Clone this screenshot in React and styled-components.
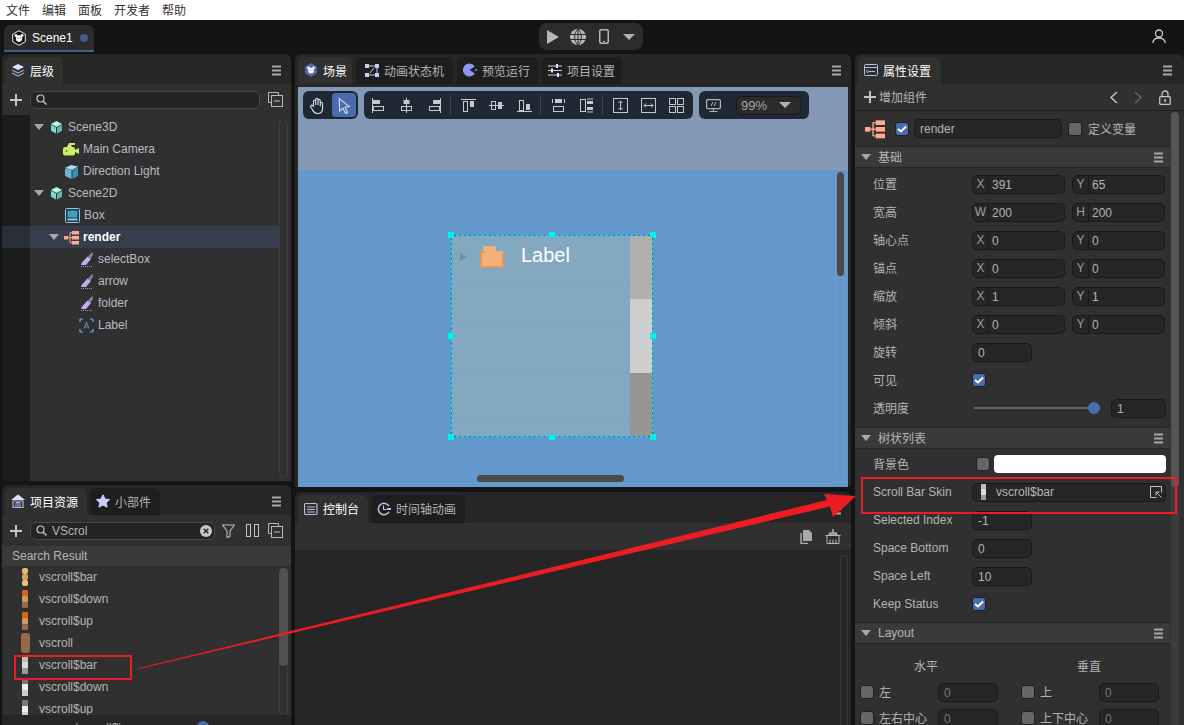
import React from 'react';
import styled, { createGlobalStyle } from 'styled-components';

const FONT = '"Liberation Sans", "Noto Sans CJK SC", sans-serif';

const Global = createGlobalStyle`
  html, body { margin: 0; padding: 0; background: #141414; }
  body { font-family: ${FONT}; font-size: 12px; color: #b4b4b4; overflow: hidden; }
  * { box-sizing: border-box; }
`;

const Page = styled.div`
  position: relative;
  width: 1184px;
  height: 725px;
  overflow: hidden;
  background: #141414;
`;

const MenuBar = styled.div`
  height: 20px;
  background: #fff;
  color: #333;
  display: flex;
  align-items: center;
  gap: 12px;
  padding: 0 0 1px 6px;
`;

const TopBar = styled.div`
  height: 34px;
  display: grid;
  grid-template-columns: 535px auto 1fr;
  align-items: start;
  padding-left: 4px;
`;

const DocTab = styled.div`
  width: 90px;
  height: 27px;
  margin-top: 5px;
  background: #2b2b2b;
  border-radius: 6px 6px 0 0;
  border-bottom: 2px solid #46598f;
  display: flex;
  align-items: center;
  gap: 5px;
  padding-left: 7px;
  color: #fff;
`;

const Dot = styled.span`
  width: 8px;
  height: 8px;
  margin-left: 2px;
  border-radius: 50%;
  background: #46598f;
`;

const RunGroup = styled.div`
  margin-top: 3px;
  width: 104px;
  height: 27px;
  background: #2c2c2c;
  border-radius: 8px;
  display: flex;
  align-items: center;
  padding-left: 8px;
`;

const UserSlot = styled.div`
  justify-self: end;
  margin: 9px 18px 0 0;
  display: flex;
`;

const Columns = styled.div`
  display: flex;
  padding-left: 2px;
  height: 671px;
`;

const Column = styled.div`
  width: ${p => p.$w}px;
  margin-right: ${p => p.$mr || 0}px;
  display: flex;
  flex-direction: column;
  gap: ${p => p.$gap || 0}px;
`;

const Panel = styled.div`
  height: ${p => (p.$h ? `${p.$h}px` : 'auto')};
  flex: ${p => (p.$h ? 'none' : 1)};
  background: #262626;
  border-radius: 6px 6px 0 0;
  display: flex;
  flex-direction: column;
  overflow: hidden;
  position: relative;
`;

const TabStrip = styled.div`
  height: ${p => p.$h || 30}px;
  flex: none;
  padding: 3px ${p => p.$pr || 10}px 0 3px;
  display: flex;
  gap: ${p => p.$gap || 3}px;
  align-items: stretch;
`;

const Tab = styled.div`
  width: ${p => p.$w}px;
  border-radius: 6px 6px 0 0;
  background: ${p => (p.$active ? '#303030' : '#1e1e1e')};
  color: ${p => (p.$active ? '#fff' : '#b4b4b4')};
  display: flex;
  align-items: center;
  gap: 5px;
  padding: 0 0 1px ${p => p.$pad || 6}px;
  white-space: nowrap;
`;

const MenuSlot = styled.div`
  margin-left: auto;
  align-self: center;
  display: flex;
`;

const ToolRow = styled.div`
  height: 31px;
  flex: none;
  background: #303030;
  display: flex;
  align-items: center;
  padding-left: 8px;
`;

const Search = styled.div`
  width: ${p => p.$w}px;
  height: 18px;
  margin-left: 8px;
  background: #242424;
  border: 1px solid #474747;
  border-radius: 6px;
  display: flex;
  align-items: center;
  gap: 5px;
  padding: 0 2px 0 5px;
  color: #b4b4b4;
`;

const ClearSlot = styled.span`
  margin-left: auto;
  display: flex;
`;

const IconSlot = styled.span`
  display: flex;
  margin-left: ${p => p.$ml || 0}px;
`;

const TreeArea = styled.div`
  flex: 1;
  display: grid;
  grid-template-columns: 28px 1fr 12px;
  min-height: 0;
  background: #303030;
  position: relative;
`;

const Gutter = styled.div`
  background: #1c1c1c;
`;

const TreeList = styled.div`
  padding-top: 1px;
  grid-column: 2;
`;

const Row = styled.div`
  height: 22px;
  display: flex;
  align-items: center;
  padding-left: ${p => p.$pad}px;
  gap: 4px;
  color: ${p => (p.$sel ? '#fff' : '#b6bcc6')};
  font-weight: ${p => (p.$sel ? 700 : 400)};
  background: ${p => (p.$sel ? '#363d4d' : 'transparent')};
  position: relative;
  &::before {
    content: '';
    display: ${p => (p.$sel ? 'block' : 'none')};
    position: absolute;
    left: -28px;
    width: 28px;
    top: 0;
    bottom: 0;
    background: #2a2f3b;
  }
`;

const Caret = styled.span`
  width: 0;
  height: 0;
  margin-right: 1px;
  border-left: 5px solid transparent;
  border-right: 5px solid transparent;
  border-top: 6px solid #a8a8a8;
`;

const Track = styled.div`
  margin: ${p => p.$mt || 4}px 3px 3px 0;
  border: 1px solid #3e3e3e;
  border-radius: 5px;
`;

const TrackThumb = styled.div`
  height: ${p => p.$h}px;
  margin: -1px;
  background: #505050;
  border-radius: 5px;
`;

const ResultHead = styled.div`
  height: 20px;
  flex: none;
  background: #3a3a3a;
  padding-left: 10px;
  display: flex;
  align-items: center;
  color: #b4b4b4;
`;

const ResList = styled.div`
  flex: 1;
  min-height: 0;
  display: grid;
  grid-template-columns: 1fr 12px;
  background: #303030;
  overflow: hidden;
`;

const ResRow = styled.div`
  height: 22px;
  display: flex;
  align-items: center;
  color: #b4b4b4;
`;

const ThumbCell = styled.span`
  width: 37px;
  display: flex;
  justify-content: center;
  padding-left: 9px;
`;

const ResFooter = styled.div`
  height: 10px;
  flex: none;
  background: #262626;
  position: relative;
  overflow: hidden;
  padding: 6px 0 0 43px;
  line-height: 14px;
  color: #a8a8a8;
`;

const FooterKnob = styled.span`
  position: absolute;
  left: 195px;
  top: 6px;
  width: 12px;
  height: 12px;
  border-radius: 50%;
  background: #4a6cae;
`;

const Viewport = styled.div`
  flex: 1;
  margin: 3px 3px 0;
  background: #6498cc;
  position: relative;
  overflow: hidden;
`;

const SceneBand = styled.div`
  height: 83px;
  background: #8499b6;
`;

const SceneToolbar = styled.div`
  position: absolute;
  left: 5px;
  top: 4px;
  display: flex;
  gap: 6px;
  height: 28px;
`;

const ToolGroup = styled.div`
  background: #1f2835;
  border-radius: 6px;
  display: flex;
  align-items: center;
  padding: ${p => p.$pad || '0 3px 0 0'};
`;

const ToolBtn = styled.span`
  width: ${p => p.$w || 28}px;
  height: 24px;
  display: flex;
  align-items: center;
  justify-content: center;
  border-radius: 4px;
  background: ${p => (p.$on ? '#4a6cae' : 'transparent')};
`;

const ToolSep = styled.span`
  width: 1px;
  height: 20px;
  margin: 0 3px 0 2px;
  background: #3a4452;
`;

const Zoom = styled.div`
  width: 65px;
  height: 19px;
  margin-left: 9px;
  background: #2b2b2b;
  border: 1px solid #1a1a1a;
  border-radius: 5px;
  display: flex;
  align-items: center;
  justify-content: space-between;
  padding: 0 9px 0 4px;
  font-size: 13px;
  color: #a8a8a8;
`;

const ZoomCaret = styled.span`
  width: 0;
  height: 0;
  margin-left: ${p => p.$ml || 0}px;
  border-left: 6px solid transparent;
  border-right: 6px solid transparent;
  border-top: 6px solid #b4b4b4;
`;

const ScrollTrackV = styled.div`
  position: absolute;
  right: 4px;
  top: 85px;
  bottom: 4px;
  width: 9px;
  border: 1px solid rgba(255, 255, 255, 0.05);
  border-radius: 5px;
`;

const ScrollTrackH = styled.div`
  position: absolute;
  left: 3px;
  right: 14px;
  bottom: 3px;
  height: 9px;
  border: 1px solid rgba(255, 255, 255, 0.05);
  border-radius: 5px;
`;

const ScrollV = styled.div`
  position: absolute;
  left: 539px;
  top: 85px;
  width: 7px;
  height: 104px;
  border-radius: 4px;
  background: #4a4a4a;
`;

const ScrollH = styled.div`
  position: absolute;
  left: 179px;
  top: 388px;
  width: 147px;
  height: 7px;
  border-radius: 4px;
  background: #4a4a4a;
`;

const Widget = styled.div`
  position: absolute;
  left: 153px;
  top: 148px;
  width: 202px;
  height: 202px;
  background: #84a8bf;
  border: 1px solid #00868c;
  display: grid;
  grid-template-columns: 1fr 22px;
  &::after {
    content: '';
    position: absolute;
    inset: -1px;
    border: 1px dashed #1fd8e8;
  }
`;

const WidgetRows = styled.div`
  display: flex;
  flex-direction: column;
`;

const WidgetRow = styled.div`
  height: 46px;
  border-bottom: 1px solid #7ca4c6;
  display: flex;
  align-items: center;
  padding: 0 0 3px 8px;
  color: #fff;
  font-size: 20px;
`;

const WidgetTri = styled.span`
  width: 0;
  height: 0;
  border-top: 4px solid transparent;
  border-bottom: 4px solid transparent;
  border-left: 7px solid #7f8a94;
  margin-right: 13px;
`;

const WidgetText = styled.span`
  margin: 0 0 4px 17px;
`;

const WidgetBar = styled.div`
  display: flex;
  flex-direction: column;
`;

const BarPart = styled.div`
  height: ${p => p.$h}px;
  background: ${p => p.$c};
`;

const Handle = styled.span`
  position: absolute;
  z-index: 1;
  width: 6px;
  height: 6px;
  background: #00f0f0;
  left: ${p => p.$x * 2.02 - 4}px;
  top: ${p => p.$y * 2.02 - 4}px;
`;

const ConsoleBar = styled.div`
  height: 27px;
  flex: none;
  background: #303030;
  display: flex;
  align-items: center;
  justify-content: flex-end;
  gap: 13px;
  padding-right: 10px;
`;

const ConsoleBody = styled.div`
  flex: 1;
  display: flex;
  justify-content: flex-end;
  padding: 5px 3px 0 0;
`;

const ConsoleTrack = styled.div`
  width: 8px;
  border: 1px solid #3a3a3a;
  border-bottom: 0;
  border-radius: 5px 5px 0 0;
`;

const PropBody = styled.div`
  flex: 1;
  display: grid;
  grid-template-columns: 315px 1fr;
  background: #303030;
  min-height: 0;
  overflow: hidden;
`;

const PropTools = styled.div`
  height: 27px;
  flex: none;
  background: #303030;
  border-bottom: 1px solid #1f1f1f;
  display: flex;
  align-items: center;
  padding: 0 13px 0 9px;
  gap: 3px;
  color: #b4b4b4;
`;

const ToolsText = styled.span`
  padding-bottom: 2px;
`;

const NavIcons = styled.div`
  margin-left: auto;
  display: flex;
  align-items: center;
  gap: 16px;
`;

const NodeHead = styled.div`
  height: 35px;
  display: flex;
  align-items: center;
  padding-left: 10px;
  color: #b4b4b4;
`;

const Check = styled.span`
  width: 14px;
  height: 14px;
  flex: none;
  border-radius: 3px;
  background: ${p => (p.$on ? '#4a6cae' : '#666')};
  border: 1px solid #1f1f1f;
  display: flex;
  align-items: center;
  justify-content: center;
`;

const TextField = styled.div`
  width: ${p => p.$w}px;
  height: 19px;
  background: #262626;
  border: 1px solid #1a1a1a;
  border-radius: 5px;
  display: flex;
  align-items: center;
  padding: ${p => p.$pt ?? 2}px ${p => p.$pr || 0}px 0 ${p => p.$pad || 5}px;
  color: ${p => (p.$dim ? '#6e7680' : '#b4b4b4')};
  flex: none;
`;

const FieldTag = styled.span`
  width: 16px;
  height: calc(100% + 2px);
  margin: -2px 3px 0 -5px;
  border-right: 1px solid #1a1a1a;
  display: flex;
  align-items: center;
  justify-content: center;
  color: #9aa0a8;
`;

const Section = styled.div`
  height: 22px;
  margin-top: ${p => p.$mt || 0}px;
  background: #3a3a3a;
  border-top: 1px solid #262626;
  border-bottom: 1px solid #262626;
  display: flex;
  align-items: center;
  padding: 0 7px 0 6px;
  gap: 5px;
  color: #b4b4b4;
`;

const SectionCaret = styled(Caret)`
  margin-right: 2px;
`;

const SectionTitle = styled.span`
  padding-bottom: ${p => (p.$cjk ? 2 : 0)}px;
`;

const PropRows = styled.div`
  padding-top: ${p => p.$pt || 0}px;
`;

const PropRow = styled.div`
  height: 28px;
  display: flex;
  align-items: center;
  padding-left: 18px;
  gap: 7px;
  color: #b4b4b4;
`;

const PropLabel = styled.span`
  width: 92px;
  flex: none;
  padding-bottom: ${p => (p.$cjk ? 2 : 0)}px;
`;

const Slider = styled.div`
  width: 120px;
  height: 2px;
  background: #666;
  position: relative;
  margin: 0 10px 0 2px;
`;

const SliderKnob = styled.span`
  position: absolute;
  right: -6px;
  top: -5px;
  width: 12px;
  height: 12px;
  border-radius: 50%;
  background: #4a6cae;
`;

const ColorCell = styled.div`
  display: flex;
  align-items: center;
  gap: 4px;
  margin-left: 4px;
`;

const Swatch = styled.div`
  width: 172px;
  height: 18px;
  background: #fff;
  border-radius: 4px;
`;

const SkinThumb = styled.span`
  width: 5px;
  height: 16px;
  margin-right: 10px;
  background: linear-gradient(#bdbdbd 0 33%, #dcdcdc 33% 66%, #999 66%);
`;

const LayoutHead = styled.div`
  display: flex;
  height: 35px;
  padding-top: 13px;
  text-align: center;
`;

const LayoutTitle = styled.span`
  width: ${p => p.$w}px;
  margin-right: ${p => p.$mr || 0}px;
`;

const LayoutGrid = styled.div`
  display: grid;
  grid-template-columns: 161px 161px;
  padding-left: 5px;
`;

const LayoutCell = styled.div`
  height: 26px;
  display: flex;
  align-items: center;
`;

const LayoutLabel = styled.span`
  width: 59px;
  margin-left: 5px;
  flex: none;
  padding-bottom: 2px;
`;

const PropScroll = styled.div`
  margin: 1px 0 0 1px;
  width: 8px;
  border-radius: 5px;
  background: #3c3c3c;
  display: flex;
  flex-direction: column;
`;

const PropThumb = styled.div`
  height: 375px;
  background: #555;
  border-radius: 5px;
`;

const Annotations = styled.svg`
  position: absolute;
  left: 0;
  top: 0;
  pointer-events: none;
`;

/* ---- icons ---- */

const Svg = ({ s = 14, w, h, vb, children }) => (
  <svg width={w || s} height={h || s} viewBox={vb || `0 0 ${w || s} ${h || s}`} fill="none">
    {children}
  </svg>
);

const MenuIcon = () => (
  <Svg w={9} h={11}>
    <path d="M0 1.500h9M0 5.500h9M0 9.500h9" stroke="#a8a8a8" strokeWidth="2" />
  </Svg>
);

const PlusIcon = () => (
  <Svg s={12}>
    <path d="M6 0v12M0 6h12" stroke="#c4c4c4" strokeWidth="2" />
  </Svg>
);

const SearchIcon = () => (
  <Svg s={11}>
    <circle cx="4.500" cy="4.500" r="3.500" stroke="#c4c4c4" strokeWidth="1.200" />
    <path d="M7 7l3.500 3.500" stroke="#c4c4c4" strokeWidth="1.500" />
  </Svg>
);

const CollapseIcon = () => (
  <Svg s={15}>
    <path d="M3.500 10.500H.5V.5h10V3" stroke="#b8b8b8" />
    <rect x="3.500" y="3.500" width="11" height="11" stroke="#b8b8b8" />
    <path d="M6 9h6" stroke="#b8b8b8" />
  </Svg>
);

const LogoIcon = ({ bg = '#111', line = '#eee', s = 16 }) => (
  <Svg s={s} vb="0 0 16 16">
    <path d="M8 .7l6.300 3.600v7.400L8 15.300l-6.300-3.600V4.300z" fill={bg} stroke={line} />
    <circle cx="5" cy="5.400" r="1.500" fill="#fff" />
    <circle cx="11" cy="5.400" r="1.500" fill="#fff" />
    <ellipse cx="8" cy="8.600" rx="3.200" ry="3.300" fill="#fff" />
    <path d="M6.500 8h.8M8.700 8h.8" stroke={bg} />
  </Svg>
);

const LayersIcon = () => (
  <Svg s={14}>
    <path d="M7 1l6 3-6 3-6-3z" fill="#dfe2ff" />
    <path d="M1 7l6 3 6-3M1 10l6 3 6-3" stroke="#9aa0c0" strokeWidth="1.300" />
  </Svg>
);

const CubeIcon = () => (
  <Svg s={15}>
    <path d="M7.500 1l5.500 3-5.500 3L2 4z" fill="#b8f3e8" />
    <path d="M2 4.800l5 2.800v6L2 10.800z" fill="#7fd8cb" />
    <path d="M13 4.800L8 7.600v6l5-2.800z" fill="#58b8ad" />
  </Svg>
);

const CameraIcon = () => (
  <Svg w={16} h={14}>
    <path d="M4 5l2-4h6v2H8l1 2z" fill="#c8ee6c" />
    <rect x="0" y="5" width="12" height="8.500" rx="2" fill="#c8ee6c" />
    <path d="M12 8l4-2v6l-4-2z" fill="#c8ee6c" />
    <circle cx="3.500" cy="9" r="1" fill="#6a8030" />
  </Svg>
);

const LightIcon = () => (
  <Svg s={15}>
    <path d="M1 4l6-3 7 1.500-6 3.500z" fill="#a8def0" />
    <path d="M1 4.500l6.500 1.800V15L1 12z" fill="#67b6d6" />
    <path d="M8.500 6.300L14 3v9l-5.500 3z" fill="#3f8fb5" />
  </Svg>
);

const BoxIcon = () => (
  <Svg s={15}>
    <rect x=".5" y=".5" width="14" height="14" rx="1" stroke="#7fd0ee" />
    <rect x="2.500" y="2.500" width="10" height="7" fill="#3aa0c6" />
    <rect x="2.500" y="10.500" width="10" height="2" fill="#7fd0ee" />
  </Svg>
);

const RenderIcon = ({ s = 15 }) => (
  <Svg s={s} vb="0 0 15 15">
    <rect x="0" y="6" width="4" height="3.500" fill="#ffa98f" />
    <rect x="8" y="1" width="7" height="3.500" fill="#ffa98f" />
    <rect x="8" y="6" width="7" height="3.500" fill="#ffa98f" />
    <rect x="8" y="11" width="7" height="3.500" fill="#ffa98f" />
    <path d="M4 7.700h4M6 2.700v10M6 2.700h2M6 12.700h2" stroke="#ffa98f" />
  </Svg>
);

const BrushIcon = () => (
  <Svg w={14} h={15}>
    <path d="M12.500 0L8 4.500l2.500 2 2.500-4z" fill="#8d86a8" />
    <path d="M7.500 4.500L2 10.500l-1 2.500h5l5-6z" fill="#bcb0f4" />
    <path d="M1 14.500h12" stroke="#9a94b4" strokeDasharray="1 1" />
  </Svg>
);

const LabelIcon = () => (
  <Svg s={15}>
    <path d="M1 4V2a1 1 0 0 1 1-1h2M11 1h2a1 1 0 0 1 1 1v2M14 11v2a1 1 0 0 1-1 1h-2M4 14H2a1 1 0 0 1-1-1v-2" stroke="#6eb4ec" strokeWidth="1.200" />
    <path d="M5 10.500l2.500-6 2.500 6M6 9h3" stroke="#5c86b0" strokeWidth="1.200" />
  </Svg>
);

const HomeIcon = () => (
  <Svg s={14}>
    <path d="M7 .5L14 6H0z" fill="#dfe2ff" />
    <path d="M2 7h10v6.500H2z" stroke="#aeb4e0" strokeWidth="1.200" />
    <path d="M5 8.500h4v5H5zM7 8.500v5" stroke="#aeb4e0" />
  </Svg>
);

const StarIcon = () => (
  <Svg s={14}>
    <path d="M7 .8l2 4.200 4.600.6-3.400 3.100.9 4.500L7 11l-4.100 2.200.9-4.500L.4 5.600 5 5z" fill="#c8ceff" stroke="#c8ceff" strokeLinejoin="round" />
  </Svg>
);

const FilterIcon = () => (
  <Svg w={13} h={14}>
    <path d="M.5 1h12L8 7v5.500L5 13.500V7z" stroke="#b8b8b8" strokeWidth="1.100" />
  </Svg>
);

const ColumnsIcon = () => (
  <Svg w={13} h={13}>
    <rect x=".5" y=".5" width="4" height="12" stroke="#c4c4c4" />
    <rect x="8.500" y=".5" width="4" height="12" stroke="#c4c4c4" />
  </Svg>
);

const ClearIcon = () => (
  <Svg s={12}>
    <circle cx="6" cy="6" r="6" fill="#c8c8c8" />
    <path d="M3.700 3.700l4.600 4.600M8.300 3.700L3.700 8.300" stroke="#222" strokeWidth="1.500" />
  </Svg>
);

const GraphIcon = () => (
  <Svg s={14}>
    <rect x="0" y="1" width="4" height="4" fill="#c8ceee" />
    <rect x="10" y="1" width="4" height="4" fill="#c8ceee" />
    <rect x="0" y="10" width="4" height="4" fill="#c8ceee" />
    <rect x="10" y="10" width="4" height="4" fill="#c8ceee" />
    <path d="M4 3h6M12 5v5M4 12h6M9 5L5 10" stroke="#c8ceee" />
  </Svg>
);

const PacIcon = () => (
  <Svg s={14}>
    <path d="M6.500.5a6.500 6.500 0 1 0 5.400 10L6.500 7l5.300-3.400A6.500 6.500 0 0 0 6.500.5z" fill="#8f96f0" />
    <circle cx="13" cy="7" r="1" fill="#8f96f0" />
  </Svg>
);

const SlidersIcon = () => (
  <Svg s={14}>
    <path d="M0 3h14M0 7.500h14M0 12h14" stroke="#c8ceee" />
    <rect x="8" y="1" width="2" height="4" fill="#e4e6ff" />
    <rect x="3" y="5.500" width="2" height="4" fill="#e4e6ff" />
    <rect x="9" y="10" width="2" height="4" fill="#e4e6ff" />
  </Svg>
);

const ConsoleIcon = () => (
  <Svg s={14}>
    <rect x=".5" y="1.500" width="12.500" height="11" rx="1.500" stroke="#b8bedc" strokeWidth="1.200" />
    <path d="M3 5h8M3 7.500h8M3 10h8" stroke="#b8bedc" />
  </Svg>
);

const ClockIcon = () => (
  <Svg s={14}>
    <path d="M12 4.200A5.700 5.700 0 1 0 12 9.800" stroke="#b8bedc" strokeWidth="1.500" />
    <path d="M6.500 3.500v4h3" stroke="#b8bedc" strokeWidth="1.200" />
    <rect x="10" y="6" width="4" height="2" fill="#b8bedc" />
  </Svg>
);

const PropsIcon = () => (
  <Svg s={14}>
    <rect x=".5" y="1.500" width="13" height="11" rx="1" stroke="#b8bedc" />
    <path d="M1 4.500h12" stroke="#b8bedc" />
    <circle cx="3.500" cy="8.500" r="1" stroke="#b8bedc" />
    <path d="M5 8.500h6" stroke="#b8bedc" />
  </Svg>
);

const CopyIcon = () => (
  <Svg w={12} h={14}>
    <path d="M3 0h6l3 3v8H3z" fill="#a8a8a8" />
    <path d="M1 3v10.500h7" stroke="#a8a8a8" strokeWidth="1.500" />
  </Svg>
);

const BasketIcon = () => (
  <Svg w={16} h={15}>
    <path d="M8 0v4M5 4h6l1 2H4z" stroke="#b8b8b8" strokeWidth="1.400" />
    <path d="M.5 6.500h15M2 6.500v8h12v-8M5 10.500v4M8 10.500v4M11 10.500v4" stroke="#b8b8b8" />
  </Svg>
);

const PlayIcon = () => (
  <Svg w={12} h={14}>
    <path d="M0 0l12 7-12 7z" fill="#b8b8b8" />
  </Svg>
);

const GlobeIcon = () => (
  <Svg s={16}>
    <circle cx="8" cy="8" r="8" fill="#b8b8b8" />
    <path d="M0 5.500h16M0 10.500h16M8 0v16M8 0C3.500 4 3.500 12 8 16M8 0c4.500 4 4.500 12 0 16" stroke="#2c2c2c" />
  </Svg>
);

const PhoneIcon = () => (
  <Svg w={10} h={15}>
    <rect x=".75" y=".75" width="8.500" height="13.500" rx="1.500" stroke="#b8b8b8" strokeWidth="1.500" />
    <path d="M4 12.500h2" stroke="#b8b8b8" />
  </Svg>
);

const UserIcon = () => (
  <Svg s={14}>
    <circle cx="7" cy="4.500" r="3.500" stroke="#ccc" strokeWidth="1.300" />
    <path d="M.7 14c.5-3.500 3-5 6.300-5s5.800 1.500 6.300 5" stroke="#ccc" strokeWidth="1.300" />
  </Svg>
);

const ChevronIcon = ({ dir, color }) => (
  <Svg w={9} h={13}>
    <path d={dir === 'l' ? 'M8 1L2 6.500 8 12' : 'M1 1l6 5.500L1 12'} stroke={color} strokeWidth="1.500" />
  </Svg>
);

const LockIcon = () => (
  <Svg w={12} h={15}>
    <path d="M3 7V4a3 3 0 0 1 6 0v3" stroke="#c4c4c4" strokeWidth="1.300" />
    <rect x=".7" y="6.700" width="10.600" height="7.600" rx="1" stroke="#c4c4c4" strokeWidth="1.300" />
    <path d="M6 9v3" stroke="#c4c4c4" strokeWidth="1.500" />
  </Svg>
);

const TickIcon = () => (
  <Svg w={10} h={8}>
    <path d="M1 4l3 2.500L9 1.500" stroke="#fff" strokeWidth="2" />
  </Svg>
);

const PickIcon = () => (
  <Svg s={12}>
    <path d="M.5 11.500V.5h11v6M.5 11.500h6" stroke="#c4c4c4" />
    <path d="M11.500 11.500L6 6M6 6h3.500M6 6v3.500" stroke="#c4c4c4" />
  </Svg>
);

const HandIcon = () => (
  <Svg s={18} vb="0 0 16 16">
    <path d="M4 9V4.500a1 1 0 0 1 2 0V8 3a1 1 0 0 1 2 0v5-4a1 1 0 0 1 2 0v5-2.500a1 1 0 0 1 2 0V11c0 3-2 4.500-4.500 4.500-2 0-3-.8-4-2.500L1.500 9.500c-.6-1 .8-1.800 1.500-1z" stroke="#ddd" />
  </Svg>
);

const ArrowToolIcon = () => (
  <Svg s={17} vb="0 0 16 16">
    <path d="M3 1.500l9.500 7.500-4 .5 2.500 5-2 1-2.500-5-3 2.800z" stroke="#d8e0f0" />
  </Svg>
);

const AlignIcon = ({ kind }) => {
  const c = '#c8c8c8';
  const parts = {
    hl: <><path d="M1.500 0v15" stroke={c} /><rect x="2" y="2" width="7" height="4" fill={c} /><rect x="2.500" y="8.500" width="10" height="4" stroke={c} /></>,
    hc: <><path d="M7.500 0v15" stroke={c} /><rect x="4.500" y="2" width="6" height="4" fill={c} /><rect x="2.500" y="8.500" width="10" height="4" stroke={c} /></>,
    hr: <><path d="M13.500 0v15" stroke={c} /><rect x="6" y="2" width="7" height="4" fill={c} /><rect x="2.500" y="8.500" width="10" height="4" stroke={c} /></>,
    vt: <><path d="M0 1.500h15" stroke={c} /><rect x="2.500" y="3.500" width="4" height="10" stroke={c} /><rect x="9" y="3" width="4" height="6" fill={c} /></>,
    vc: <><path d="M0 7.500h15" stroke={c} /><rect x="2.500" y="3.500" width="4" height="8" stroke={c} /><rect x="9" y="4" width="4" height="7" fill={c} /></>,
    vb: <><path d="M0 13.500h15" stroke={c} /><rect x="2.500" y="2.500" width="4" height="10" stroke={c} /><rect x="9" y="6" width="4" height="6" fill={c} /></>,
    dh: <><path d="M1.500 1v4M13.500 1v4" stroke={c} /><rect x="4" y="1" width="7" height="4" fill={c} /><rect x="2.500" y="8.500" width="10" height="5" stroke={c} /></>,
    dv: <><rect x="1.500" y="1.500" width="5" height="12" stroke={c} /><rect x="8" y="3" width="6" height="3" fill={c} /><rect x="8" y="9" width="6" height="3" fill={c} /><path d="M8 1h6M8 14h6" stroke={c} /></>,
    sh: <><rect x=".5" y=".5" width="14" height="14" stroke={c} /><path d="M7.500 3v9M5.500 5l2-2 2 2M5.500 10l2 2 2-2" stroke={c} /></>,
    sw: <><rect x=".5" y=".5" width="14" height="14" stroke={c} /><path d="M3 7.500h9M5 5.500l-2 2 2 2M10 5.500l2 2-2 2" stroke={c} /></>,
    gr: <><rect x=".5" y=".5" width="6" height="6" stroke={c} /><rect x="8.500" y=".5" width="6" height="6" stroke={c} /><rect x=".5" y="8.500" width="6" height="6" stroke={c} /><rect x="8.500" y="8.500" width="6" height="6" stroke={c} /></>,
  };
  return <Svg s={15}>{parts[kind]}</Svg>;
};

const MonitorIcon = () => (
  <Svg s={15}>
    <rect x=".6" y="1.600" width="13.800" height="9" rx="1" stroke="#b4b4b4" strokeWidth="1.200" />
    <path d="M5 8l2-4M8 8l2-4M7.500 10.500v2.500M3.500 13.500h8" stroke="#b4b4b4" />
  </Svg>
);

const FolderIcon = () => (
  <svg width="24" height="22" viewBox="0 0 24 22">
    <path d="M1 6h3V1h11v5h8v15H1z" fill="#f5b078" stroke="#e09458" strokeWidth="1.500" />
    <path d="M4 5V1h11v5h8" stroke="#e8d0b8" fill="none" />
  </svg>
);

const BarThumb = ({ tones, h = 18, w = 6, rx = 0 }) => (
  <svg width={w} height={h} viewBox={`0 0 ${w} ${h}`}>
    {tones.map((c, i) => (
      <rect key={c} x="0" y={(i * h) / tones.length} width={w} height={h / tones.length} rx={rx} fill={c} />
    ))}
  </svg>
);

/* ---- data ---- */

const treeRows = [
  { pad: 4, caret: true, icon: <CubeIcon />, text: 'Scene3D' },
  { pad: 33, icon: <CameraIcon />, text: 'Main Camera' },
  { pad: 34, icon: <LightIcon />, text: 'Direction Light' },
  { pad: 4, caret: true, icon: <CubeIcon />, text: 'Scene2D' },
  { pad: 35, icon: <BoxIcon />, text: 'Box' },
  { pad: 19, caret: true, icon: <RenderIcon />, text: 'render', sel: true },
  { pad: 50, icon: <BrushIcon />, text: 'selectBox' },
  { pad: 50, icon: <BrushIcon />, text: 'arrow' },
  { pad: 50, icon: <BrushIcon />, text: 'folder' },
  { pad: 49, icon: <LabelIcon />, text: 'Label' },
];

const ORANGE = ['#e8b770', '#d9a45e', '#ecc07c'];
const ARROWS = ['#d9651c', '#c99a5e', '#96694a'];
const GREYS = ['#bdbdbd', '#dcdcdc', '#999'];
const LIGHTS = ['#777', '#eee', '#ccc'];

const resources = [
  { name: 'vscroll$bar', tones: ORANGE, rx: 2 },
  { name: 'vscroll$down', tones: ARROWS, rx: 1 },
  { name: 'vscroll$up', tones: ARROWS, rx: 1 },
  { name: 'vscroll', tones: ['#96694a'], w: 9, h: 20, rx: 3 },
  { name: 'vscroll$bar', tones: GREYS },
  { name: 'vscroll$down', tones: LIGHTS },
  { name: 'vscroll$up', tones: LIGHTS },
];

const basics = [
  ['位置', 'X', '391', 'Y', '65'],
  ['宽高', 'W', '200', 'H', '200'],
  ['轴心点', 'X', '0', 'Y', '0'],
  ['锚点', 'X', '0', 'Y', '0'],
  ['缩放', 'X', '1', 'Y', '1'],
  ['倾斜', 'X', '0', 'Y', '0'],
];

const handles = [
  [0, 0], [50, 0], [100, 0], [0, 50], [100, 50], [0, 100], [50, 100], [100, 100],
];

const Pair = ({ tag, value }) => (
  <TextField $w={93}>
    <FieldTag>{tag}</FieldTag>
    {value}
  </TextField>
);

const SectionBar = ({ title, mt, cjk }) => (
  <Section $mt={mt}>
    <SectionCaret />
    <SectionTitle $cjk={cjk}>{title}</SectionTitle>
    <MenuSlot><MenuIcon /></MenuSlot>
  </Section>
);

const LayoutItem = ({ label }) => (
  <LayoutCell>
    <Check />
    <LayoutLabel>{label}</LayoutLabel>
    <TextField $w={60} $dim>0</TextField>
  </LayoutCell>
);

export default function App() {
  return (
    <Page>
      <Global />
      <MenuBar>
        <span>文件</span><span>编辑</span><span>面板</span><span>开发者</span><span>帮助</span>
      </MenuBar>
      <TopBar>
        <DocTab>
          <LogoIcon />
          Scene1
          <Dot />
        </DocTab>
        <RunGroup>
          <PlayIcon />
          <IconSlot $ml={11}><GlobeIcon /></IconSlot>
          <IconSlot $ml={13}><PhoneIcon /></IconSlot>
          <ZoomCaret $ml={14} />
        </RunGroup>
        <UserSlot><UserIcon /></UserSlot>
      </TopBar>
      <Columns>
        <Column $w={289} $mr={4} $gap={4}>
          <Panel $h={427}>
            <TabStrip>
              <Tab $w={58} $active><LayersIcon />层级</Tab>
              <MenuSlot><MenuIcon /></MenuSlot>
            </TabStrip>
            <ToolRow>
              <PlusIcon />
              <Search $w={230}><SearchIcon /></Search>
              <IconSlot $ml={8}><CollapseIcon /></IconSlot>
            </ToolRow>
            <TreeArea>
              <Gutter />
              <TreeList>
                {treeRows.map(r => (
                  <Row key={r.text} $pad={r.pad} $sel={r.sel}>
                    {r.caret && <Caret />}
                    {r.icon}
                    {r.text}
                  </Row>
                ))}
              </TreeList>
              <Track />
            </TreeArea>
          </Panel>
          <Panel>
            <TabStrip>
              <Tab $w={82} $active><HomeIcon />项目资源</Tab>
              <Tab $w={70}><StarIcon />小部件</Tab>
              <MenuSlot><MenuIcon /></MenuSlot>
            </TabStrip>
            <ToolRow>
              <PlusIcon />
              <Search $w={185}><SearchIcon />VScrol<ClearSlot><ClearIcon /></ClearSlot></Search>
              <IconSlot $ml={7}><FilterIcon /></IconSlot>
              <IconSlot $ml={11}><ColumnsIcon /></IconSlot>
              <IconSlot $ml={9}><CollapseIcon /></IconSlot>
            </ToolRow>
            <ResultHead>Search Result</ResultHead>
            <ResList>
              <div>
                {resources.map((r, i) => (
                  <ResRow key={i}>
                    <ThumbCell><BarThumb tones={r.tones} w={r.w} h={r.h} rx={r.rx} /></ThumbCell>
                    {r.name}
                  </ResRow>
                ))}
              </div>
              <Track $mt={2}><TrackThumb $h={98} /></Track>
            </ResList>
            <ResFooter>comp/vscroll$bar<FooterKnob /></ResFooter>
          </Panel>
        </Column>
        <Column $w={556} $mr={4} $gap={5}>
          <Panel $h={433}>
            <TabStrip $gap={4}>
              <Tab $w={54} $active><LogoIcon bg="#5866b0" line="#5866b0" s={14} />场景</Tab>
              <Tab $w={97} $pad={9}><GraphIcon />动画状态机</Tab>
              <Tab $w={81}><PacIcon />预览运行</Tab>
              <Tab $w={80}><SlidersIcon />项目设置</Tab>
              <MenuSlot><MenuIcon /></MenuSlot>
            </TabStrip>
            <Viewport>
              <SceneBand />
              <ScrollTrackV />
              <ScrollTrackH />
              <SceneToolbar>
                <ToolGroup $pad="0 2px 0 0">
                  <ToolBtn $w={29}><HandIcon /></ToolBtn>
                  <ToolBtn $w={24} $on><ArrowToolIcon /></ToolBtn>
                </ToolGroup>
                <ToolGroup>
                  <ToolBtn><AlignIcon kind="hl" /></ToolBtn>
                  <ToolBtn><AlignIcon kind="hc" /></ToolBtn>
                  <ToolBtn><AlignIcon kind="hr" /></ToolBtn>
                  <ToolSep />
                  <ToolBtn><AlignIcon kind="vt" /></ToolBtn>
                  <ToolBtn><AlignIcon kind="vc" /></ToolBtn>
                  <ToolBtn><AlignIcon kind="vb" /></ToolBtn>
                  <ToolSep />
                  <ToolBtn><AlignIcon kind="dh" /></ToolBtn>
                  <ToolBtn><AlignIcon kind="dv" /></ToolBtn>
                  <ToolSep />
                  <ToolBtn><AlignIcon kind="sh" /></ToolBtn>
                  <ToolBtn><AlignIcon kind="sw" /></ToolBtn>
                  <ToolBtn><AlignIcon kind="gr" /></ToolBtn>
                </ToolGroup>
                <ToolGroup $pad="0 8px 0 0">
                  <ToolBtn><MonitorIcon /></ToolBtn>
                  <Zoom>99%<ZoomCaret /></Zoom>
                </ToolGroup>
              </SceneToolbar>
              <ScrollV />
              <ScrollH />
              <Widget>
                <WidgetRows>
                  <WidgetRow>
                    <WidgetTri />
                    <FolderIcon />
                    <WidgetText>Label</WidgetText>
                  </WidgetRow>
                  <WidgetRow />
                  <WidgetRow />
                  <WidgetRow />
                </WidgetRows>
                <WidgetBar>
                  <BarPart $h={63} $c="#b0b0b0" />
                  <BarPart $h={74} $c="#cfcfcf" />
                  <BarPart $h={63} $c="#969696" />
                </WidgetBar>
                {handles.map(([x, y]) => <Handle key={`${x}-${y}`} $x={x} $y={y} />)}
              </Widget>
            </Viewport>
          </Panel>
          <Panel>
            <TabStrip $h={31}>
              <Tab $w={70} $active><ConsoleIcon />控制台</Tab>
              <Tab $w={94}><ClockIcon />时间轴动画</Tab>
              <MenuSlot><MenuIcon /></MenuSlot>
            </TabStrip>
            <ConsoleBar><CopyIcon /><BasketIcon /></ConsoleBar>
            <ConsoleBody><ConsoleTrack /></ConsoleBody>
          </Panel>
        </Column>
        <Column $w={329}>
          <Panel>
            <TabStrip $pr={12}>
              <Tab $w={83} $active><PropsIcon />属性设置</Tab>
              <MenuSlot><MenuIcon /></MenuSlot>
            </TabStrip>
            <PropTools>
              <PlusIcon />
              <ToolsText>增加组件</ToolsText>
              <NavIcons>
                <ChevronIcon dir="l" color="#c4c4c4" />
                <ChevronIcon dir="r" color="#666" />
                <LockIcon />
              </NavIcons>
            </PropTools>
            <PropBody>
              <div>
                <NodeHead>
                  <RenderIcon s={20} />
                  <IconSlot $ml={10}><Check $on><TickIcon /></Check></IconSlot>
                  <IconSlot $ml={5}><TextField $w={148} $pt={0}>render</TextField></IconSlot>
                  <IconSlot $ml={6}><Check /></IconSlot>
                  <IconSlot $ml={6}>定义变量</IconSlot>
                </NodeHead>
                <SectionBar title="基础" cjk />
                <PropRows $pt={2}>
                  {basics.map(([label, a, av, b, bv]) => (
                    <PropRow key={label}>
                      <PropLabel $cjk>{label}</PropLabel>
                      <Pair tag={a} value={av} />
                      <Pair tag={b} value={bv} />
                    </PropRow>
                  ))}
                  <PropRow><PropLabel $cjk>旋转</PropLabel><TextField $w={60}>0</TextField></PropRow>
                  <PropRow><PropLabel $cjk>可见</PropLabel><Check $on><TickIcon /></Check></PropRow>
                  <PropRow>
                    <PropLabel $cjk>透明度</PropLabel>
                    <Slider><SliderKnob /></Slider>
                    <TextField $w={55}>1</TextField>
                  </PropRow>
                </PropRows>
                <SectionBar title="树状列表" mt={5} cjk />
                <PropRows $pt={1}>
                  <PropRow>
                    <PropLabel $cjk>背景色</PropLabel>
                    <ColorCell><Check /><Swatch /></ColorCell>
                  </PropRow>
                  <PropRow>
                    <PropLabel>Scroll Bar Skin</PropLabel>
                    <TextField $w={194} $pad={8} $pr={3} $pt={0}>
                      <SkinThumb />
                      vscroll$bar
                      <ClearSlot><PickIcon /></ClearSlot>
                    </TextField>
                  </PropRow>
                  <PropRow><PropLabel>Selected Index</PropLabel><TextField $w={60}>-1</TextField></PropRow>
                  <PropRow><PropLabel>Space Bottom</PropLabel><TextField $w={60}>0</TextField></PropRow>
                  <PropRow><PropLabel>Space Left</PropLabel><TextField $w={60}>10</TextField></PropRow>
                  <PropRow><PropLabel>Keep Status</PropLabel><Check $on><TickIcon /></Check></PropRow>
                </PropRows>
                <SectionBar title="Layout" mt={4} />
                <LayoutHead>
                  <LayoutTitle $w={142} $mr={19}>水平</LayoutTitle>
                  <LayoutTitle $w={146}>垂直</LayoutTitle>
                </LayoutHead>
                <LayoutGrid>
                  <LayoutItem label="左" />
                  <LayoutItem label="上" />
                  <LayoutItem label="左右中心" />
                  <LayoutItem label="上下中心" />
                </LayoutGrid>
              </div>
              <PropScroll><PropThumb /></PropScroll>
            </PropBody>
          </Panel>
        </Column>
      </Columns>
      <Annotations width="1184" height="725" viewBox="0 0 1184 725">
        <rect x="15" y="656" width="116" height="23" fill="none" stroke="#ed1c24" strokeWidth="2" />
        <rect x="862" y="478" width="314" height="35" fill="none" stroke="#ed1c24" strokeWidth="2" />
        <path d="M139 668L827 500L824 494L856 496L833 517L830 506.500L139 669z" fill="#ed1c24" />
      </Annotations>
    </Page>
  );
}
